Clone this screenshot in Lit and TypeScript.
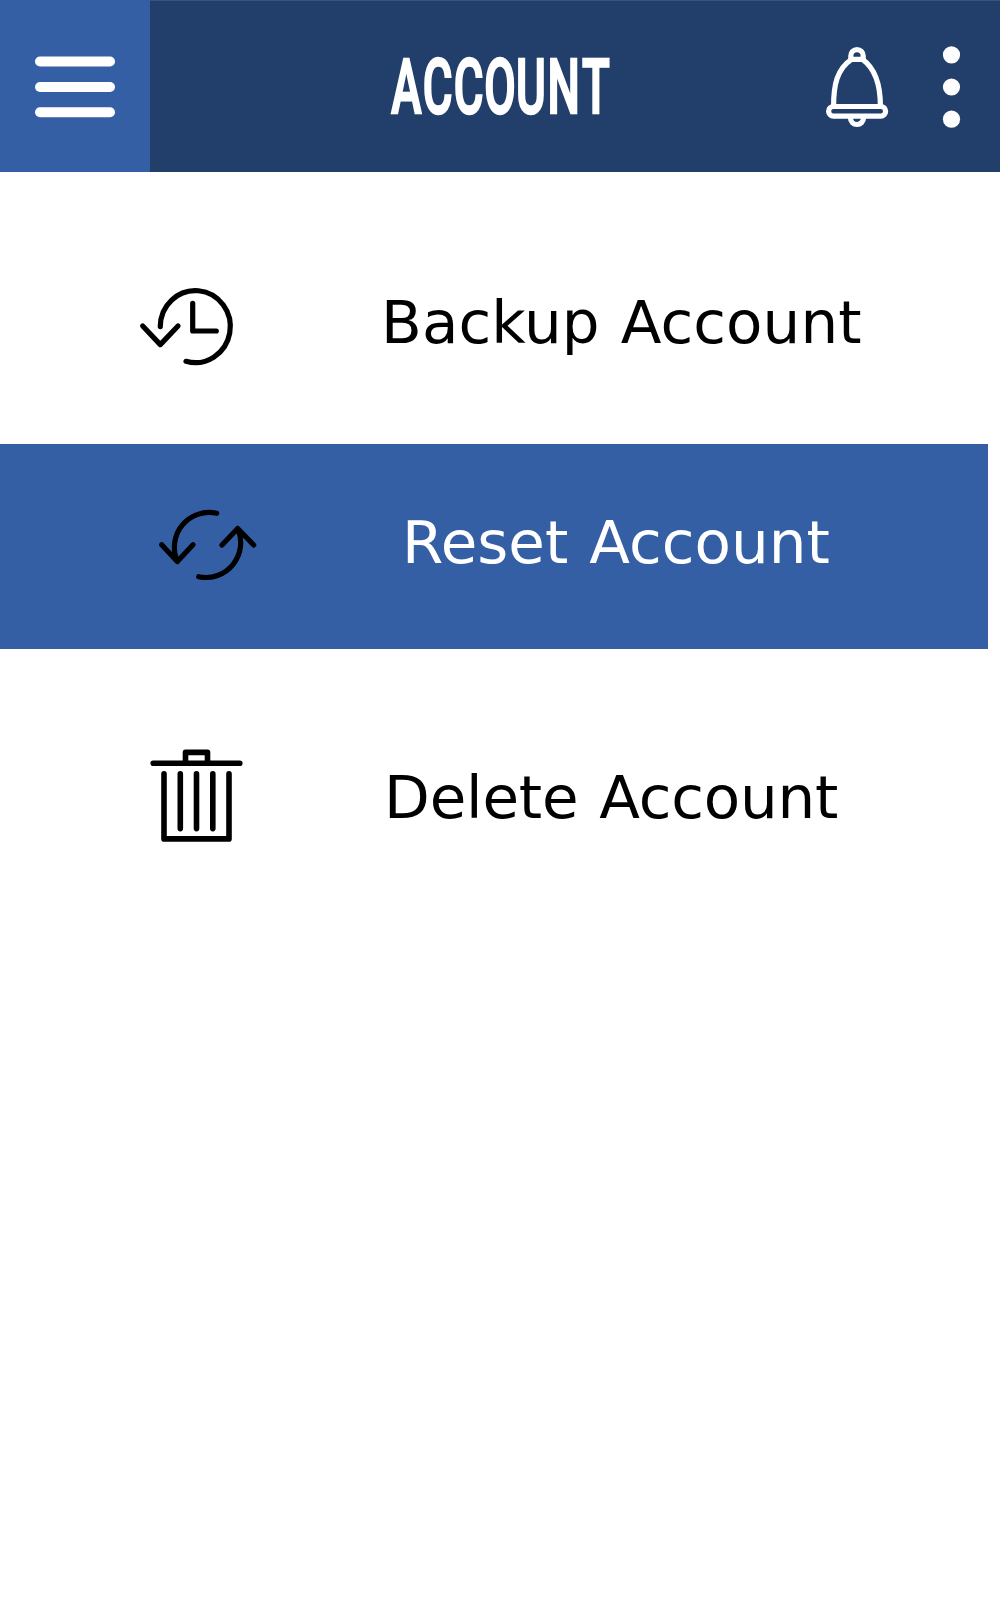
import { LitElement, html, css, svg } from "lit";
import { customElement, property } from "lit/decorators.js";

const icons = {
  backup: svg`<path d="M160.3 326.6A35 36 0 1 1 186 361.3"/><path d="M142.7 326L160.3 344.6L178 326M192.7 303.3V331H216.3"/>`,
  reset: svg`<path d="M216.7 513.3A34.8 34.8 0 0 0 177.3 561.3M161.7 544.7L177.3 561.5L193 544.7"/><path d="M198.7 576.7A34.8 34.8 0 0 0 237.7 528.5M222 545L237.7 528.5L253.7 545"/>`,
  trash: svg`<path d="M153.2 763.7H239.8M185.5 763.7V752.8H207.5V763.7M164 774.3V839.3H229V774.3M180.3 774.3V829M196.5 774.3V829M212.8 774.3V829"/>`,
};

@customElement("account-header")
class AccountHeader extends LitElement {
  static styles = css`
    :host { display: flex; height: 172px; background: #223f6b; }
    .menu { width: 150px; height: 172px; background: #345fa4; }
    .bar { flex: 1; box-sizing: border-box; height: 172px; border-top: 1px solid #3a537b; display: flex; }
    svg { display: block; }
    .bar svg { margin-top: -1px; }
    .title { font-family: Roboto, "Liberation Sans", sans-serif; font-weight: 500; font-size: 76px; fill: #fff; stroke: #fff; stroke-width: 2.4px; }
  `;
  render() {
    return html`
      <svg class="menu" viewBox="0 0 150 172" fill="#fff">
        <rect x="35" y="56.5" width="80" height="10" rx="5" />
        <rect x="35" y="82" width="80" height="10" rx="5" />
        <rect x="35" y="107.2" width="80" height="10" rx="5" />
      </svg>
      <div class="bar">
        <svg width="850" height="172" viewBox="150 0 850 172">
          <g transform="translate(390.7 113) scale(0.6 1)">
            <text class="title" x="1 53.5 105 156 209 261.5 319">ACCOUNT</text>
          </g>
          <g fill="none" stroke="#fff" stroke-width="5.2">
            <path d="M833.6 106C833.6 85 837 69 851.5 59.3H862.5C876 69 880.4 85 880.4 106" />
            <path d="M850.8 59V55.8A6.2 6.2 0 0 1 863.2 55.8V59" />
            <rect x="828.6" y="106.5" width="57" height="9.7" rx="4.85" />
            <path d="M850.5 117V118A6.5 6.5 0 0 0 863.5 118V117" />
          </g>
          <g fill="#fff">
            <circle cx="951.5" cy="54.8" r="8.6" />
            <circle cx="951.5" cy="87" r="8.6" />
            <circle cx="951.5" cy="119.2" r="8.6" />
          </g>
        </svg>
      </div>
    `;
  }
}

@customElement("account-row")
class AccountRow extends LitElement {
  @property() label = "";
  @property() icon: keyof typeof icons = "backup";
  static styles = css`
    :host { display: flex; align-items: flex-start; height: 100%; }
    .icon { display: block; flex: none; fill: none; stroke: #000; stroke-width: 5.2; stroke-linecap: round; stroke-linejoin: round; }
    .icon.trash { stroke-width: 5.6; }
    .label { font: 59.5px/70px Verdana, "DejaVu Sans", sans-serif; word-spacing: 2px; white-space: nowrap; }
    .label.backup { margin: 116.3px 0 0 121px; letter-spacing: 0.1px; }
    .label.reset { margin: 64.3px 0 0 142px; letter-spacing: 0.03px; }
    .label.trash { margin: 113.6px 0 0 124px; letter-spacing: -0.18px; }
  `;
  render() {
    const top = { backup: 172, reset: 444, trash: 649.4 }[this.icon];
    return html`
      <svg class="icon ${this.icon}" width="260" height="205" viewBox="0 ${top} 260 205">${icons[this.icon]}</svg>
      <span class="label ${this.icon}">${this.label}</span>
    `;
  }
}

@customElement("app-root")
class AppRoot extends LitElement {
  static styles = css`
    :host { display: block; width: 1000px; height: 1600px; background: #fff; overflow: hidden; }
    .list { display: grid; grid-template-rows: 271.7px 205.7px 250px; }
    .selected { background: #345fa4; width: 987.6px; color: #fff; }
  `;
  render() {
    return html`
      <account-header></account-header>
      <main class="list">
        <account-row icon="backup" label="Backup Account"></account-row>
        <account-row class="selected" icon="reset" label="Reset Account"></account-row>
        <account-row icon="trash" label="Delete Account"></account-row>
      </main>
    `;
  }
}
